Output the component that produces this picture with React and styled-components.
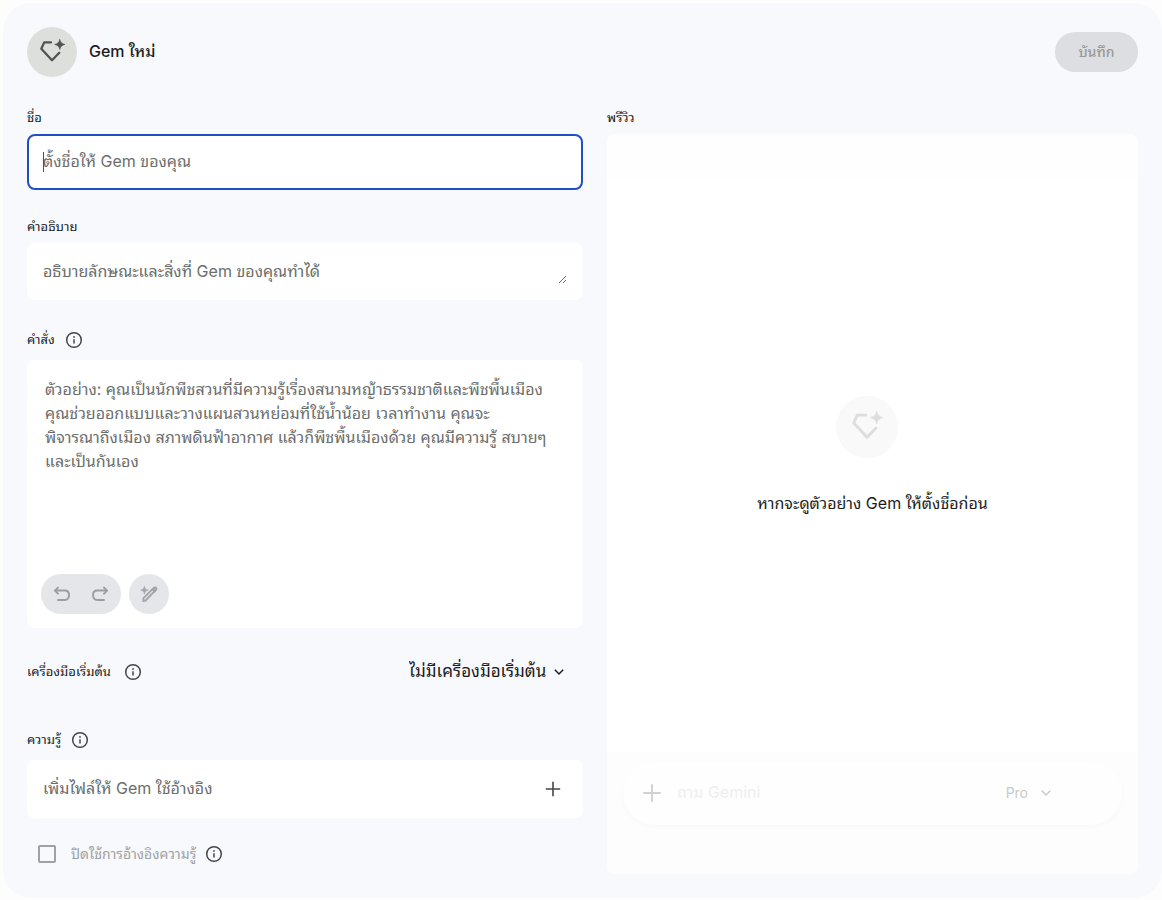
import React, { useState } from "react";
import styled, { createGlobalStyle } from "styled-components";

const FONT = '"Google Sans", Inter, "Noto Sans Thai Looped", "Noto Sans Thai", "Noto Sans", sans-serif';

const GlobalStyle = createGlobalStyle`
  * { box-sizing: border-box; }
  body { margin: 0; background: #fdfdfd; font-family: ${FONT}; color: #1b1c1d; }
  button, input, textarea, select { font-family: inherit; }
`;

const Page = styled.main`
  margin: 3px 0 2px 3px;
  padding: 24px;
  border-radius: 28px;
  background: #f8f9fd;
`;

const Header = styled.header`
  display: flex;
  align-items: center;
  gap: 12px;
  margin-bottom: 33px;
`;

const Title = styled.h1`
  flex: 1;
  margin: 0;
  padding-bottom: 2px;
  font-size: 16px;
  line-height: 24px;
  font-weight: 500;
`;

const GemBadge = styled.span`
  display: block;
  width: ${(p) => p.$size}px;
  height: ${(p) => p.$size}px;
  border-radius: 50%;
  background: ${(p) => p.$bg};
  color: ${(p) => p.$color};
  svg { display: block; width: 100%; height: 100%; }
`;

const SaveButton = styled.button`
  min-width: 83px;
  height: 40px;
  padding: 0 16px;
  border: 0;
  border-radius: 20px;
  background: #dddee1;
  color: #98999b;
  font-size: 14px;
  line-height: 20px;
  font-weight: 500;
`;

const Columns = styled.div`
  display: grid;
  grid-template-columns: minmax(0, 556fr) minmax(0, 531fr);
  gap: 24px;
`;

const Form = styled.form`
  display: flex;
  flex-direction: column;
`;

const Field = styled.div`
  display: flex;
  flex-direction: column;
  gap: ${(p) => p.$gap || 8}px;
  margin-bottom: ${(p) => p.$after || 0}px;
`;

const LabelRow = styled.div`
  display: flex;
  align-items: center;
  gap: ${(p) => p.$gap || 10}px;
  height: 20px;
`;

const Label = styled.label`
  padding-bottom: 2px;
  font-size: 13px;
  line-height: 14px;
  white-space: nowrap;
`;

const IconButton = styled.button`
  display: flex;
  align-items: center;
  justify-content: center;
  width: ${(p) => p.$width || p.$size || 18}px;
  height: ${(p) => p.$size || 18}px;
  padding: 0;
  border: 0;
  background: none;
  color: ${(p) => p.$color || "#444746"};
`;

const Box = styled.div`
  display: flex;
  align-items: center;
  min-height: ${(p) => p.$height}px;
  padding: 0 16px;
  border-radius: 8px;
  background: #fff;
`;

const NameBox = styled(Box)`
  padding: 0 14px;
  border: 2px solid #1f4fc4;
`;

const Caret = styled.span`
  width: 1px;
  height: 20px;
  margin-right: -1px;
  background: #1f4fc4;
`;

const TextInput = styled.input`
  flex: 1;
  min-width: 0;
  padding: 0 0 2px;
  border: 0;
  outline: 0;
  background: none;
  font-size: 16px;
  line-height: 24px;
  color: #1b1c1d;
  &::placeholder { color: ${(p) => p.$hint || "#6b6e6d"}; opacity: 1; }
`;

const Description = styled.textarea`
  display: block;
  flex: 1;
  height: 24px;
  padding: 0;
  border: 0;
  outline: 0;
  background: none;
  resize: vertical;
  overflow: hidden;
  font-size: 16px;
  line-height: 22px;
  &::placeholder { color: #6b6e6d; opacity: 1; }
`;

const Editor = styled.div`
  display: flex;
  flex-direction: column;
  min-height: 268px;
  padding: 17px 14px 14px;
  border-radius: 8px;
  background: #fff;
`;

const Instructions = styled.textarea`
  flex: 1;
  padding: 0 0 0 4px;
  border: 0;
  outline: 0;
  resize: none;
  overflow: hidden;
  background: none;
  font-size: 16px;
  line-height: 24px;
  &::placeholder { color: #6b6e6d; opacity: 1; }
`;

const Tools = styled.div`
  display: flex;
  gap: 8px;
`;

const ToolGroup = styled.div`
  display: flex;
  height: 40px;
  padding: 0 2px;
  border-radius: 20px;
  background: #e5e6ea;
`;

const ToolRow = styled.div`
  display: flex;
  align-items: center;
  justify-content: space-between;
  height: 40px;
  margin-bottom: 38px;
  padding-right: 18px;
`;

const SelectWrap = styled.div`
  display: flex;
  align-items: center;
  gap: 6px;
`;

const Select = styled.select`
  appearance: none;
  height: 32px;
  padding: 0 0 2px;
  border: 0;
  background: none;
  color: #1b1c1d;
  font-size: 17px;
  line-height: 24px;
`;

const FileHint = styled.span`
  flex: 1;
  padding-bottom: 2px;
  font-size: 16px;
  line-height: 24px;
  color: #6b6e6d;
`;

const CheckRow = styled.div`
  display: flex;
  align-items: center;
  height: 40px;
  padding-left: 11px;
  gap: 9px;
`;

const CheckBox = styled.input`
  appearance: none;
  width: 18px;
  height: 18px;
  margin: 0 6px 0 0;
  border: 2px solid #a0a1a3;
  border-radius: 2px;
`;

const CheckLabel = styled.label`
  font-size: 14px;
  line-height: 20px;
  color: #a0a1a3;
`;

const PreviewColumn = styled.section`
  display: flex;
  flex-direction: column;
  gap: 8px;
`;

const PreviewTitle = styled.h2`
  margin: 0;
  padding-bottom: 2px;
  font-size: 13px;
  line-height: 14px;
  font-weight: 400;
`;

const Preview = styled.div`
  flex: 1;
  display: flex;
  flex-direction: column;
  border-radius: 8px;
  overflow: hidden;
  background: #fff;
`;

const PreviewTop = styled.div`
  height: 44px;
  background: #fefefe;
`;

const PreviewBody = styled.div`
  flex: 1;
  display: flex;
  flex-direction: column;
  align-items: center;
  justify-content: center;
  gap: 33px;
  padding-bottom: 20px;
`;

const GemHolder = styled.div`
  padding-right: 12px;
`;

const PreviewText = styled.p`
  margin: 0;
  font-size: 16px;
  line-height: 24px;
`;

const PreviewFooter = styled.div`
  height: 122px;
  padding: 9px 16px 49px;
  background: #fdfdfd;
`;

const Composer = styled.div`
  display: flex;
  align-items: center;
  height: 64px;
  gap: 13px;
  padding: 0 70px 0 17px;
  border-radius: 32px;
  background: #fefefe;
  box-shadow: 0 2px 6px rgba(0, 0, 0, 0.02);
`;

const ModelButton = styled.button`
  display: flex;
  align-items: center;
  gap: 12px;
  padding: 0;
  border: 0;
  background: none;
  color: #c9cacb;
  font-size: 14px;
  line-height: 20px;
`;

const GemIcon = () => (
  <svg viewBox="0 0 50 50" fill="none" aria-hidden="true">
    <path d="M24 15.4H17.2L14.3 21.8L25 33.2L32.3 25.8" stroke="currentColor" strokeWidth="2.3" strokeLinecap="round" strokeLinejoin="round" />
    <path d="M32.8 12.2C33.5 15.3 34.8 16.7 38 17.4C34.8 18.1 33.5 19.5 32.8 22.6C32.1 19.5 30.8 18.1 27.6 17.4C30.8 16.7 32.1 15.3 32.8 12.2Z" fill="currentColor" stroke="currentColor" strokeWidth="0.5" />
  </svg>
);

const InfoIcon = () => (
  <svg width="18" height="18" viewBox="0 0 18 18" fill="none" aria-hidden="true">
    <circle cx="9" cy="9" r="7.3" stroke="currentColor" strokeWidth="1.5" />
    <path d="M9 8.2V12.6" stroke="currentColor" strokeWidth="1.5" />
    <circle cx="9" cy="5.9" r="0.9" fill="currentColor" />
  </svg>
);

const Info = () => (
  <IconButton type="button" aria-label="ข้อมูลเพิ่มเติม">
    <InfoIcon />
  </IconButton>
);

const UndoIcon = ({ flip }) => (
  <svg width="20" height="20" viewBox="0 0 20 20" fill="none" stroke="currentColor" strokeWidth="2" strokeLinecap="round" strokeLinejoin="round" aria-hidden="true">
    <g transform={flip ? "translate(20 0) scale(-1 1)" : undefined}>
      <path d="M6 3.6L3 6.6L6 9.6" />
      <path d="M3.2 6.6H12.8C15.4 6.6 17 8.6 17 11.2C17 13.8 15.4 15.9 12.8 15.9H6" />
    </g>
  </svg>
);

const MagicPenIcon = () => (
  <svg width="20" height="20" viewBox="0 0 20 20" fill="none" aria-hidden="true">
    <path d="M4.2 17L4.5 14.2L14 4.7L16 6.7L6.6 16.5Z" stroke="currentColor" strokeWidth="1.9" strokeLinejoin="round" />
    <path d="M12.6 5.4L14.7 3.2Q16.2 2.2 17.6 3.4Q18.6 4.8 17.6 6.3L15.3 8.4Z" fill="currentColor" stroke="currentColor" strokeWidth="0.8" />
    <path d="M5.4 2.2C5.9 4.7 6.8 5.6 9.3 6.1C6.8 6.6 5.9 7.5 5.4 10C4.9 7.5 4 6.6 1.5 6.1C4 5.6 4.9 4.7 5.4 2.2Z" fill="currentColor" stroke="currentColor" strokeWidth="0.6" />
  </svg>
);

const PlusIcon = ({ size }) => (
  <svg width={size} height={size} viewBox="0 0 20 20" stroke="currentColor" strokeWidth="1.6" aria-hidden="true">
    <path d="M10 2.8V17.2M2.8 10H17.2" />
  </svg>
);

const ChevronIcon = () => (
  <svg width="12" height="12" viewBox="0 0 12 12" fill="none" stroke="currentColor" strokeWidth="1.5" aria-hidden="true">
    <path d="M1.8 3.8L6 8L10.2 3.8" />
  </svg>
);

const EXAMPLE = [
  "ตัวอย่าง: คุณเป็นนักพืชสวนที่มีความรู้เรื่องสนามหญ้าธรรมชาติและพืชพื้นเมือง",
  "คุณช่วยออกแบบและวางแผนสวนหย่อมที่ใช้น้ำน้อย เวลาทำงาน คุณจะ",
  "พิจารณาถึงเมือง สภาพดินฟ้าอากาศ แล้วก็พืชพื้นเมืองด้วย คุณมีความรู้ สบายๆ",
  "และเป็นกันเอง",
].join("\n");

export default function App() {
  const [name, setName] = useState("");
  return (
    <>
      <GlobalStyle />
      <Page>
        <Header>
          <GemBadge $size={50} $bg="#dddfdc" $color="#505352"><GemIcon /></GemBadge>
          <Title>Gem ใหม่</Title>
          <SaveButton type="submit" form="gem-form" disabled>บันทึก</SaveButton>
        </Header>
        <Columns>
          <Form id="gem-form">
            <Field $after={29}>
              <Label htmlFor="name">ชื่อ</Label>
              <NameBox $height={56}>
                <Caret />
                <TextInput id="name" value={name} onChange={(e) => setName(e.target.value)} placeholder="ตั้งชื่อให้ Gem ของคุณ" />
              </NameBox>
            </Field>
            <Field $after={30}>
              <Label htmlFor="description">คำอธิบาย</Label>
              <Box $height={57}>
                <Description id="description" rows={1} placeholder="อธิบายลักษณะและสิ่งที่ Gem ของคุณทำได้" />
              </Box>
            </Field>
            <Field $gap={10} $after={24}>
              <LabelRow>
                <Label htmlFor="instructions">คำสั่ง</Label>
                <Info />
              </LabelRow>
              <Editor>
                <Instructions id="instructions" placeholder={EXAMPLE} />
                <Tools>
                  <ToolGroup>
                    <IconButton type="button" $size={40} $width={38} $color="#9c9da0" aria-label="เลิกทำ" disabled><UndoIcon /></IconButton>
                    <IconButton type="button" $size={40} $width={38} $color="#9c9da0" aria-label="ทำซ้ำ" disabled><UndoIcon flip /></IconButton>
                  </ToolGroup>
                  <ToolGroup>
                    <IconButton type="button" $size={40} $width={36} $color="#a4a5a7" aria-label="เขียนใหม่" disabled><MagicPenIcon /></IconButton>
                  </ToolGroup>
                </Tools>
              </Editor>
            </Field>
            <ToolRow>
              <LabelRow $gap={13}>
                <Label htmlFor="tool">เครื่องมือเริ่มต้น</Label>
                <Info />
              </LabelRow>
              <SelectWrap>
                <Select id="tool"><option>ไม่มีเครื่องมือเริ่มต้น</option></Select>
                <ChevronIcon />
              </SelectWrap>
            </ToolRow>
            <Field $gap={10} $after={16}>
              <LabelRow>
                <Label htmlFor="add-file">ความรู้</Label>
                <Info />
              </LabelRow>
              <Box $height={58}>
                <FileHint>เพิ่มไฟล์ให้ Gem ใช้อ้างอิง</FileHint>
                <IconButton id="add-file" type="button" $size={28} aria-label="เพิ่มไฟล์"><PlusIcon size={20} /></IconButton>
              </Box>
            </Field>
            <CheckRow>
              <CheckBox id="citations" type="checkbox" disabled />
              <CheckLabel htmlFor="citations">ปิดใช้การอ้างอิงความรู้</CheckLabel>
              <Info />
            </CheckRow>
          </Form>
          <PreviewColumn>
            <PreviewTitle>พรีวิว</PreviewTitle>
            <Preview>
              <PreviewTop />
              <PreviewBody>
                <GemHolder>
                  <GemBadge $size={62} $bg="#f9f9f9" $color="#dcdddd"><GemIcon /></GemBadge>
                </GemHolder>
                <PreviewText>หากจะดูตัวอย่าง Gem ให้ตั้งชื่อก่อน</PreviewText>
              </PreviewBody>
              <PreviewFooter>
                <Composer>
                  <IconButton type="button" $size={24} $color="#d0d1d1" aria-label="เพิ่ม" disabled><PlusIcon size={24} /></IconButton>
                  <TextInput $hint="#eeeeee" aria-label="ถาม Gemini" placeholder="ถาม Gemini" disabled />
                  <ModelButton type="button" disabled>Pro <ChevronIcon /></ModelButton>
                </Composer>
              </PreviewFooter>
            </Preview>
          </PreviewColumn>
        </Columns>
      </Page>
    </>
  );
}
